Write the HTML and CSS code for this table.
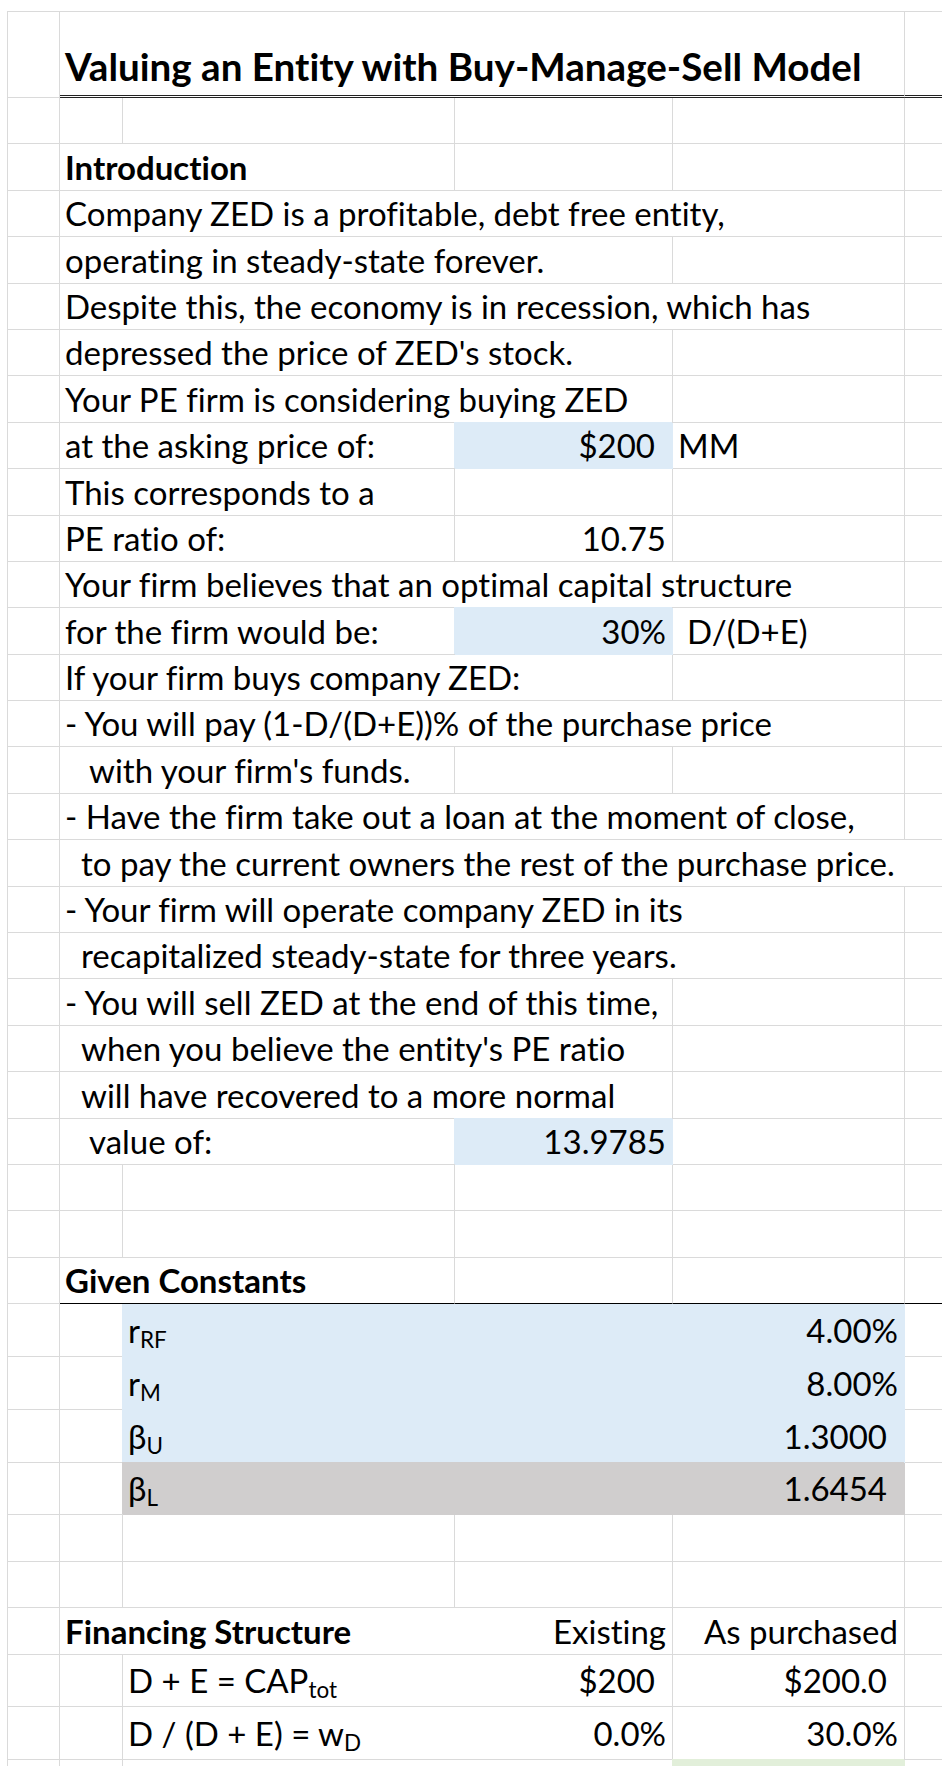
FILE: index.html
```html
<!DOCTYPE html>
<html>
<head>
<meta charset="utf-8">
<title>Valuing an Entity with Buy-Manage-Sell Model</title>
<link rel="stylesheet" href="styles.css">
</head>
<body>
<div class="sheet">
  <!-- 1 title -->
  <div class="c"></div><div class="c s4 title dbl"><span>Valuing an Entity with Buy-Manage-Sell Model</span></div><div class="c dbl"></div>
  <!-- 2 -->
  <div class="c"></div><div class="c"></div><div class="c"></div><div class="c"></div><div class="c"></div><div class="c"></div>
  <!-- 3 -->
  <div class="c"></div><div class="c s2 b"><span>Introduction</span></div><div class="c"></div><div class="c"></div><div class="c"></div>
  <!-- 4 -->
  <div class="c"></div><div class="c s4"><span>Company ZED is a profitable, debt free entity,</span></div><div class="c"></div>
  <!-- 5 -->
  <div class="c"></div><div class="c s3"><span>operating in steady-state forever.</span></div><div class="c"></div><div class="c"></div>
  <!-- 6 -->
  <div class="c"></div><div class="c s4"><span>Despite this, the economy is in recession, which has</span></div><div class="c"></div>
  <!-- 7 -->
  <div class="c"></div><div class="c s3"><span>depressed the price of ZED's stock.</span></div><div class="c"></div><div class="c"></div>
  <!-- 8 -->
  <div class="c"></div><div class="c s3"><span>Your PE firm is considering buying ZED</span></div><div class="c"></div><div class="c"></div>
  <!-- 9 -->
  <div class="c"></div><div class="c s2"><span>at the asking price of:</span></div><div class="c r blue pr"><span>$200</span></div><div class="c"><span>MM</span></div><div class="c"></div>
  <!-- 10 -->
  <div class="c"></div><div class="c s2"><span>This corresponds to a</span></div><div class="c"></div><div class="c"></div><div class="c"></div>
  <!-- 11 -->
  <div class="c"></div><div class="c s2"><span>PE ratio of:</span></div><div class="c r"><span>10.75</span></div><div class="c"></div><div class="c"></div>
  <!-- 12 -->
  <div class="c"></div><div class="c s4"><span>Your firm believes that an optimal capital structure</span></div><div class="c"></div>
  <!-- 13 -->
  <div class="c"></div><div class="c s2"><span>for the firm would be:</span></div><div class="c r blue"><span>30%</span></div><div class="c i1"><span>D/(D+E)</span></div><div class="c"></div>
  <!-- 14 -->
  <div class="c"></div><div class="c s3"><span>If your firm buys company ZED:</span></div><div class="c"></div><div class="c"></div>
  <!-- 15 -->
  <div class="c"></div><div class="c s4"><span>- You will pay (1-D/(D+E))% of the purchase price</span></div><div class="c"></div>
  <!-- 16 -->
  <div class="c"></div><div class="c s2 i3"><span>with your firm's funds.</span></div><div class="c"></div><div class="c"></div><div class="c"></div>
  <!-- 17 -->
  <div class="c"></div><div class="c s4"><span>- Have the firm take out a loan at the moment of close,</span></div><div class="c"></div>
  <!-- 18 -->
  <div class="c"></div><div class="c s5 i2"><span>to pay the current owners the rest of the purchase price.</span></div>
  <!-- 19 -->
  <div class="c"></div><div class="c s4"><span>- Your firm will operate company ZED in its</span></div><div class="c"></div>
  <!-- 20 -->
  <div class="c"></div><div class="c s4 i2"><span>recapitalized steady-state for three years.</span></div><div class="c"></div>
  <!-- 21 -->
  <div class="c"></div><div class="c s3"><span>- You will sell ZED at the end of this time,</span></div><div class="c"></div><div class="c"></div>
  <!-- 22 -->
  <div class="c"></div><div class="c s3 i2"><span>when you believe the entity's PE ratio</span></div><div class="c"></div><div class="c"></div>
  <!-- 23 -->
  <div class="c"></div><div class="c s3 i2"><span>will have recovered to a more normal</span></div><div class="c"></div><div class="c"></div>
  <!-- 24 -->
  <div class="c"></div><div class="c s2 i3"><span>value of:</span></div><div class="c r blue"><span>13.9785</span></div><div class="c"></div><div class="c"></div>
  <!-- 25 -->
  <div class="c"></div><div class="c"></div><div class="c"></div><div class="c"></div><div class="c"></div><div class="c"></div>
  <!-- 26 -->
  <div class="c"></div><div class="c"></div><div class="c"></div><div class="c"></div><div class="c"></div><div class="c"></div>
  <!-- 27 -->
  <div class="c"></div><div class="c s2 b bk"><span>Given Constants</span></div><div class="c bk"></div><div class="c bk"></div><div class="c bk"></div>
  <!-- 28 -->
  <div class="c"></div><div class="c"></div><div class="c s3 blue nt t"><span>r<sub>RF</sub></span><span>4.00%</span></div><div class="c"></div>
  <!-- 29 -->
  <div class="c"></div><div class="c"></div><div class="c s3 blue t"><span>r<sub>M</sub></span><span>8.00%</span></div><div class="c"></div>
  <!-- 30 -->
  <div class="c"></div><div class="c"></div><div class="c s3 blue t pr"><span>β<sub>U</sub></span><span>1.3000</span></div><div class="c"></div>
  <!-- 31 -->
  <div class="c"></div><div class="c"></div><div class="c s3 gray t pr"><span>β<sub>L</sub></span><span>1.6454</span></div><div class="c"></div>
  <!-- 32 -->
  <div class="c"></div><div class="c"></div><div class="c"></div><div class="c"></div><div class="c"></div><div class="c"></div>
  <!-- 33 -->
  <div class="c"></div><div class="c"></div><div class="c"></div><div class="c"></div><div class="c"></div><div class="c"></div>
  <!-- 34 -->
  <div class="c"></div><div class="c s3"><span class="bt">Financing Structure</span><span>Existing</span></div><div class="c r"><span>As purchased</span></div><div class="c"></div>
  <!-- 35 -->
  <div class="c"></div><div class="c"></div><div class="c s2 t pr"><span>D + E = CAP<sub>tot</sub></span><span>$200</span></div><div class="c r t pr"><span>$200.0</span></div><div class="c"></div>
  <!-- 36 -->
  <div class="c"></div><div class="c"></div><div class="c s2 t"><span>D / (D + E) = w<sub>D</sub></span><span>0.0%</span></div><div class="c r t"><span>30.0%</span></div><div class="c"></div>
  <!-- 37 -->
  <div class="c"></div><div class="c"></div><div class="c s2"></div><div class="c green"></div><div class="c"></div>
</div>
</body>
</html>
```

FILE: styles.css
```css
:root {
  --g: #dadada;
  --blue: #ddebf7;
  --gray: #d0cece;
  --green: #e2efda;
}
html, body {
  margin: 0;
  padding: 0;
  overflow: hidden;
  background: #fff;
}
body {
  width: 942px;
  height: 1766px;
}
.sheet {
  margin: 11px 0 0 7px;
  display: grid;
  grid-template-columns: 52px 63px 332px 218px 232px 60px;
  grid-template-rows: 86px repeat(26, 46.4px) repeat(4, 52.8px) repeat(3, 46.4px) repeat(2, 52.8px) 46.4px;
  border-left: 1px solid var(--g);
  border-top: 1px solid var(--g);
  font-family: Lato, "Open Sans", sans-serif;
  font-size: 33px;
  font-variant-ligatures: none;
  color: #000;
  width: 958px;
}
.c {
  box-sizing: border-box;
  border-right: 1px solid var(--g);
  border-bottom: 1px solid var(--g);
  display: flex;
  align-items: flex-end;
  justify-content: space-between;
  padding: 0 6px 6px 5px;
  white-space: nowrap;
  line-height: 1;
  min-width: 0;
}
.c > span { flex: none; }
.c sub {
  font-size: 0.68em;
  vertical-align: -0.22em;
  line-height: 0;
}
.s2 { grid-column: span 2; }
.s3 { grid-column: span 3; }
.s4 { grid-column: span 4; }
.s5 { grid-column: span 5; }
.r { justify-content: flex-end; }
.b, .bt { font-weight: 700; }
.title {
  font-weight: 700;
  font-size: 38.6px;
  padding-bottom: 9px;
}
.dbl { border-bottom: 3px double #222; }
.bk { border-bottom-color: #000; }
.i1 { padding-left: 14px; }
.i2 { padding-left: 21px; }
.i3 { padding-left: 29px; }
.pr { padding-right: 17px; }
.t { padding-bottom: 9px; }
.blue {
  background: var(--blue);
  border-color: var(--blue);
  box-shadow: -1px -1px 0 var(--blue);
}
.blue.nt { box-shadow: -1px 0 0 var(--blue); }
.gray {
  background: var(--gray);
  border-color: var(--gray);
  box-shadow: -1px -1px 0 var(--gray);
}
.green {
  background: var(--green);
  border-color: var(--green);
  box-shadow: -1px -1px 0 var(--green);
}
```
